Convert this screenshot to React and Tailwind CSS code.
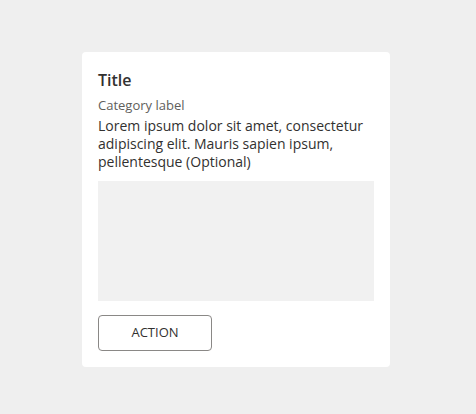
export default function App() {
  return (
    <div className="min-h-screen w-full bg-[#efefef] font-['Open_Sans',sans-serif]">
      <div className="flex pt-[52px] pl-[82px]">
        <div className="w-[308px] rounded bg-white p-4">
          <h2 className="text-[16px] leading-[25px] font-semibold text-[#323130]">Title</h2>
          <p className="mt-[3px] text-[13px] leading-[18px] text-[#605e5c]">Category label</p>
          <p className="mt-[3px] text-[14px] leading-[18px] text-[#323130]">
            Lorem ipsum dolor sit amet, consectetur adipiscing elit. Mauris sapien ipsum, pellentesque (Optional)
          </p>
          <div className="mt-[10px] h-[120px] w-full bg-[#f1f1f1]" />
          <button className="mt-[14px] flex h-[36px] w-[114px] items-center justify-center rounded-sm border border-[#8a8886] text-[13px] text-[#323130]">
            ACTION
          </button>
        </div>
      </div>
    </div>
  );
}
